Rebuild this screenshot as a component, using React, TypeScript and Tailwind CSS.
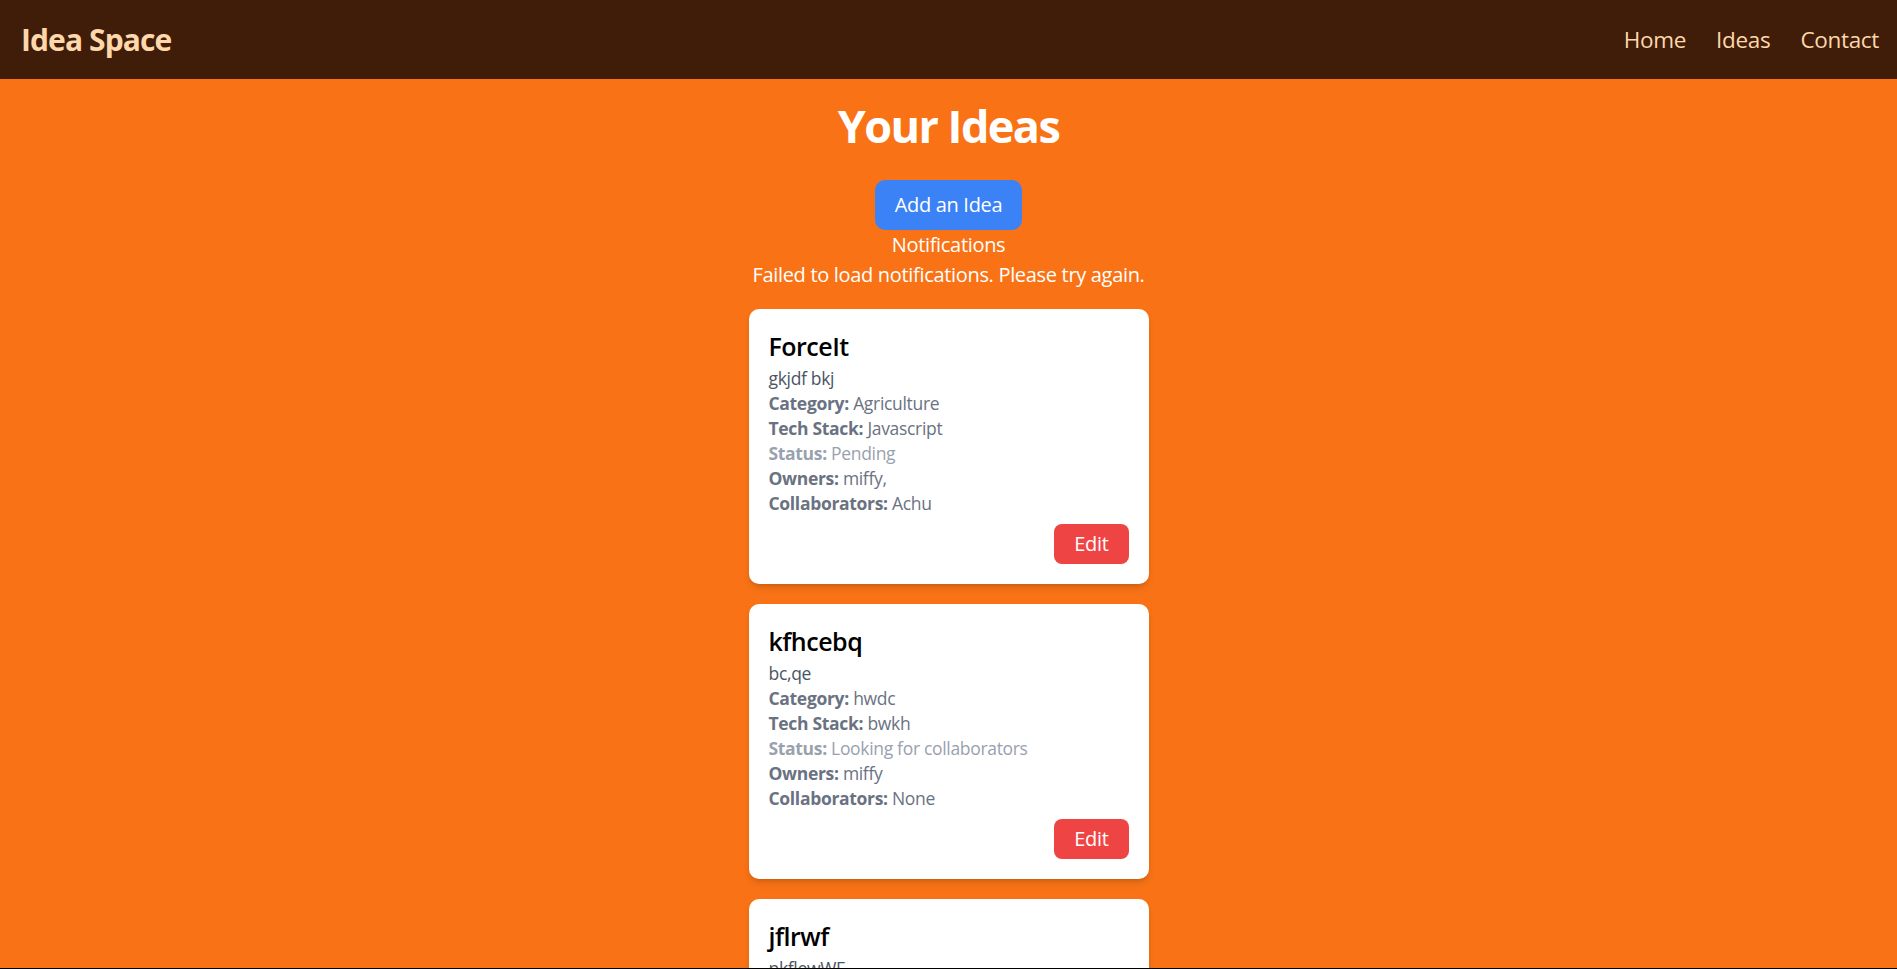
type Idea = {
  title: string;
  description: string;
  category: string;
  techStack: string;
  status: string;
  owners: string;
  collaborators: string;
};

const ideas: Idea[] = [
  {
    title: "ForceIt",
    description: "gkjdf bkj",
    category: "Agriculture",
    techStack: "Javascript",
    status: "Pending",
    owners: "miffy,",
    collaborators: "Achu",
  },
  {
    title: "kfhcebq",
    description: "bc,qe",
    category: "hwdc",
    techStack: "bwkh",
    status: "Looking for collaborators",
    owners: "miffy",
    collaborators: "None",
  },
  {
    title: "jflrwf",
    description: "nkflewWF",
    category: "wfe",
    techStack: "fwe",
    status: "Pending",
    owners: "miffy",
    collaborators: "None",
  },
];

function Navbar() {
  return (
    <nav className="flex h-[79px] items-center justify-between bg-[#3f1d09] pl-[21px] pr-[18px] text-[#fed7aa]">
      <a href="#" className="text-[30px] font-bold leading-none tracking-[-0.03em]">
        Idea Space
      </a>
      <ul className="flex gap-[30px] text-[22.5px]">
        <li><a href="#">Home</a></li>
        <li><a href="#">Ideas</a></li>
        <li><a href="#">Contact</a></li>
      </ul>
    </nav>
  );
}

/**
 * Idea card — white rounded card: title, description, a stack of
 * "Label: value" lines (status muted), then an Edit button on the right.
 */
function IdeaCard({ idea }: { idea: Idea }) {
  return (
    <div className="w-[400px] rounded-[10px] bg-white p-5 shadow-[0_5px_8px_-2px_rgba(0,0,0,0.15),0_2px_5px_-2px_rgba(0,0,0,0.1)]">
      <h2 className="text-[25px] font-semibold leading-[35px] tracking-[-0.02em] text-black">{idea.title}</h2>
      <div className="mt-[2px] text-[17.5px] leading-[25px]">
        <p className="text-gray-600">{idea.description}</p>
        <p className="text-gray-500">
          <strong>Category:</strong> {idea.category}
        </p>
        <p className="text-gray-500">
          <strong>Tech Stack:</strong> {idea.techStack}
        </p>
        <p className="text-gray-400">
          <strong>Status:</strong> {idea.status}
        </p>
        <p className="text-gray-500">
          <strong>Owners:</strong> {idea.owners}
        </p>
        <p className="text-gray-500">
          <strong>Collaborators:</strong> {idea.collaborators}
        </p>
      </div>
      <div className="mt-2 flex justify-end">
        <button className="rounded-[8px] bg-[#ef4444] px-5 py-[5px] text-[20px] leading-[30px] text-white">
          Edit
        </button>
      </div>
    </div>
  );
}

export default function App() {
  return (
    <div className="min-h-screen bg-[#f97316] font-['Open_Sans',sans-serif] tracking-[-0.02em]">
      <Navbar />
      <main className="flex flex-col items-center pt-[22px] pb-10 text-white">
        <h1 className="text-[45px] font-bold leading-[50px] tracking-[-0.035em]">Your Ideas</h1>
        <button className="mt-[29px] rounded-[10px] bg-[#3b82f6] px-5 py-[10px] text-[20px] leading-[30px] text-white">
          Add an Idea
        </button>
        <div className="text-center text-[20px] leading-[30px]">
          <h3>Notifications</h3>
          <p>Failed to load notifications. Please try again.</p>
        </div>
        <div className="mt-[19px] flex flex-col gap-5">
          {ideas.map((idea) => (
            <IdeaCard key={idea.title} idea={idea} />
          ))}
        </div>
      </main>
      <div className="fixed inset-x-0 bottom-0 h-px bg-black" />
    </div>
  );
}
